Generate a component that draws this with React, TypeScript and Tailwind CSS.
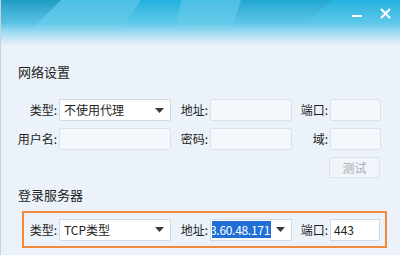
import React from "react";

const Arrow = () => (
  <svg width="9" height="5" viewBox="0 0 9 5" className="shrink-0">
    <path d="M0 0 H9 L4.5 5 Z" fill="#3a3a3a" />
  </svg>
);

const Label = ({ text, w }: { text: string; w: string }) => (
  <span className={`${w} shrink-0 pr-[2px] text-right text-[12px] leading-none text-[#222]`}>{text}</span>
);

const Field = ({ w, children }: { w: string; children?: React.ReactNode }) => (
  <div
    className={`${w} flex h-[22px] shrink-0 items-center rounded-[2px] border border-[#dbe1e8] bg-[#f4f7fb]`}
  >
    {children}
  </div>
);

const Select = ({ value }: { value: string }) => (
  <div className="flex h-[22px] w-[112px] shrink-0 items-center justify-between rounded-[2px] border border-[#d3d9e0] bg-white pl-[4px] pr-[6px]">
    <span className="text-[12px] leading-none text-[#222]">{value}</span>
    <Arrow />
  </div>
);

export default function App() {
  return (
    <div
      className="relative flex h-[255px] w-[400px] flex-col overflow-hidden border-l border-[#c9d1da] bg-[#ecf2f9]"
      style={{ fontFamily: '"Noto Sans CJK SC", "Microsoft YaHei", sans-serif' }}
    >
      {/* title bar */}
      <div className="relative h-[46px] shrink-0 bg-gradient-to-b from-[#20b2de] via-[#5cc8ea] to-[#ecf2f9]">
        <svg className="absolute inset-0" width="400" height="46" viewBox="0 0 400 46">
          <defs>
            <linearGradient id="fade" x1="0" y1="0" x2="0" y2="1">
              <stop offset="0" stopColor="#000" stopOpacity="0.12" />
              <stop offset="1" stopColor="#000" stopOpacity="0" />
            </linearGradient>
            <linearGradient id="shine" x1="0" y1="0" x2="0" y2="1">
              <stop offset="0" stopColor="#fff" stopOpacity="0.18" />
              <stop offset="1" stopColor="#fff" stopOpacity="0" />
            </linearGradient>
          </defs>
          <polygon points="0,0 60,0 30,30 0,30" fill="url(#fade)" />
          <polygon points="60,0 140,0 120,30 30,30" fill="url(#shine)" />
          <polygon points="180,0 240,0 230,30 175,30" fill="url(#shine)" />
          <polygon points="240,0 330,0 300,30 230,30" fill="url(#fade)" opacity="0.5" />
        </svg>
        <div className="absolute right-[9px] top-[8px] flex items-center gap-[17px]">
          <svg width="11" height="11" viewBox="0 0 11 11">
            <rect x="0" y="7" width="10" height="2" fill="#fff" />
          </svg>
          <svg width="11" height="11" viewBox="0 0 11 11">
            <path d="M1 1 L10 10 M10 1 L1 10" stroke="#fff" strokeWidth="2" />
          </svg>
        </div>
      </div>

      {/* 网络设置 */}
      <div className="mt-[18px] pl-[17px] text-[13px] leading-[16px] text-[#222]">网络设置</div>

      <div className="mt-[19px] flex items-center">
        <Label text="类型:" w="w-[58px]" />
        <Select value="不使用代理" />
        <Label text="地址:" w="w-[39px]" />
        <Field w="w-[82px]" />
        <Label text="端口:" w="w-[38px]" />
        <Field w="w-[51px]" />
      </div>

      <div className="mt-[7px] flex items-center">
        <Label text="用户名:" w="w-[58px]" />
        <Field w="w-[112px]" />
        <Label text="密码:" w="w-[39px]" />
        <Field w="w-[82px]" />
        <Label text="域:" w="w-[38px]" />
        <Field w="w-[51px]" />
      </div>

      <div className="mt-[7px] flex pl-[328px]">
        <div className="flex h-[21px] w-[51px] items-center justify-center rounded-[2px] border border-[#dbe1e8] bg-[#f1f5f9] text-[12px] leading-none text-[#a4acb5]">
          测试
        </div>
      </div>

      {/* 登录服务器 */}
      <div className="mt-[9px] pl-[17px] text-[13px] leading-[16px] text-[#222]">登录服务器</div>

      <div className="ml-[21px] mt-[8px] flex h-[37px] w-[365px] items-center border-2 border-[#f28a3c]">
        <Label text="类型:" w="w-[35px]" />
        <Select value="TCP类型" />
        <Label text="地址:" w="w-[39px]" />
        <div className="flex h-[22px] w-[82px] shrink-0 items-center border border-[#d3d9e0] bg-white pl-[1px] pr-[6px]">
          <div className="flex w-[59px] justify-end overflow-hidden">
            <span className="shrink-0 whitespace-nowrap bg-[#1f6fd6] pr-[1px] text-[12px] leading-[17px] tracking-[-0.3px] text-white">
              3.60.48.171
            </span>
          </div>
          <span className="ml-auto">
            <Arrow />
          </span>
        </div>
        <Label text="端口:" w="w-[38px]" />
        <div className="flex h-[22px] w-[50px] shrink-0 items-center border border-[#d3d9e0] bg-white pl-[3px] text-[12px] leading-none text-[#222]">
          443
        </div>
      </div>
    </div>
  );
}
